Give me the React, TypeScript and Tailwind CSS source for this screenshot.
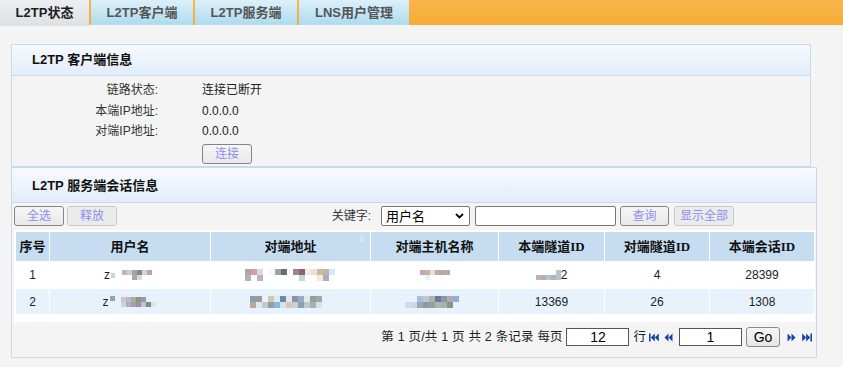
import React from "react";

const F = "font-['Liberation_Sans','Noto_Sans_CJK_SC',sans-serif]";

type PixRow = string[];
function Pix({ rows, size = 5 }: { rows: PixRow[]; size?: number }) {
  return (
    <span className="inline-flex flex-col align-middle">
      {rows.map((r, i) => (
        <span key={i} className="flex">
          {r.map((c, j) => (
            <span
              key={j}
              style={{ width: size, height: size, background: c || "transparent" }}
            />
          ))}
        </span>
      ))}
    </span>
  );
}

function Tab({ label, active, w }: { label: string; active?: boolean; w: string }) {
  return (
    <div
      className={
        "flex items-center justify-center font-bold text-[13px] h-[25px] " +
        w +
        (active
          ? " bg-gradient-to-b from-[#eceff1] to-[#dde1e3] text-[#1e1e1e] h-[26px]"
          : " bg-gradient-to-b from-[#dcf0f9] to-[#addbef] text-[#555]")
      }
    >
      {label}
    </div>
  );
}

function Btn({ label, disabled, w }: { label: string; disabled?: boolean; w: string }) {
  return (
    <div
      className={
        "h-[20px] flex items-center justify-center rounded-[3px] border text-[12px] text-[#8e8ef2] " +
        w +
        (disabled
          ? " border-[#c9c9c9] bg-[#ebebeb]"
          : " border-[#858585] bg-gradient-to-b from-[#f6f6f6] to-[#e9e9e9]")
      }
    >
      {label}
    </div>
  );
}

function NavIcon({ dir, bar }: { dir: "l" | "r"; bar?: boolean }) {
  const c = "#1744a8";
  if (dir === "l") {
    return (
      <svg width="10" height="9" viewBox="0 0 10 9">
        {bar && <rect x="0" y="0.5" width="1.6" height="8" fill={c} />}
        <polygon points={bar ? "1.8,4.5 5.8,0.5 5.8,8.5" : "0.5,4.5 4.5,0.5 4.5,8.5"} fill={c} />
        <polygon points={bar ? "5.8,4.5 9.8,0.5 9.8,8.5" : "4.5,4.5 8.5,0.5 8.5,8.5"} fill={c} />
      </svg>
    );
  }
  return (
    <svg width="10" height="9" viewBox="0 0 10 9">
      <polygon points={bar ? "0.2,0.5 4.2,4.5 0.2,8.5" : "1.5,0.5 5.5,4.5 1.5,8.5"} fill={c} />
      <polygon points={bar ? "4.2,0.5 8.2,4.5 4.2,8.5" : "5.5,0.5 9.5,4.5 5.5,8.5"} fill={c} />
      {bar && <rect x="8.4" y="0.5" width="1.6" height="8" fill={c} />}
    </svg>
  );
}

const user1: PixRow[] = [
  ["#c7b6af", "#d3c8d0", "#98a9a8", "#8f8190", "#c8d8d8", "#c89bab"],
  ["", "", "#b0a8a0", "#d8d8e6", "", ""],
];
const user2: PixRow[] = [
  ["#d0c8b8", "#b9b8d0", "#a0b198", "#8f9888", "#9898b0", "", ""],
  ["#c8d2e2", "#c0a8b0", "#a8a0a0", "#9890b0", "#b8c6d2", "#908870", "#d0e8e8"],
];
const addr1: PixRow[] = [
  ["#a9a8a6", "#d4a19f", "#e0d8d8", "", "#f0f8f8", "#a8a0a8", "#607079", "", "#a28282", "#8e6172", "#eeeee6", "#e6dfe2", "#d8b98f", "#b8b8b0", "#d8e8f8", ""],
  ["#b2b2c2", "", "#b9b1c8", "", "", "", "", "", "", "#c0d8d8", "", "", "#f3e9df", "#b0a9c0", "", ""],
];
const addr2: PixRow[] = [
  ["#9199b1", "#9899a1", "", "#d0c9b1", "#e0e8f0", "#6a89b1", "#e2e8f0", "#8891b1", "#98a9c9", "#e0e8f0", "#98a198", "#a0a9a9", ""],
  ["#b8a999", "#e8e8e0", "#c0c8d0", "#90a0a8", "#88b8e0", "#d8e0e8", "#d8c8b0", "#c8d0d8", "#90a0a8", "#c0c8d0", "#a8b0b0", "#d8e0e8", ""],
];
const host1: PixRow[] = [
  ["#c8a1c0", "#c0b898", "#e8e0c8", "#b0b0a8", "#d0a0a8", "#a8b0b0"],
  ["", "#e8f2fc", "", "", "", ""],
];
const host2: PixRow[] = [
  ["", "", "#a8c0e0", "#c0c8d0", "#b0b0b8", "#6878a0", "#8898a0", "#b0a8b8", "#98a8d8", ""],
  ["#d8d8e0", "#c8d8e8", "#a0a8b8", "#9098a8", "#90a890", "#a8b8b8", "#b0b0a8", "#909080", "", ""],
];
const tun1: PixRow[] = [
  ["", "", "", "", "#c0c0c8"],
  ["#c8b0a8", "#b8b0a8", "#a8c8d8", "#a8b8c8", "#c0c0c8"],
];

const cols = "grid grid-cols-[33px_160px_159px_127px_105px_104px_104px] gap-x-[1px]";

export default function App() {
  return (
    <div className={"w-[843px] h-[367px] bg-[#f4f4f4] text-[12px] text-[#222] overflow-hidden " + F}>
      {/* tabs */}
      <div className="flex h-[25px] bg-gradient-to-b from-[#f8b54b] to-[#f7ad34] items-start">
        <Tab label="L2TP状态" active w="w-[89px]" />
        <div className="w-[2px]" />
        <Tab label="L2TP客户端" w="w-[102px]" />
        <div className="w-[2px]" />
        <Tab label="L2TP服务端" w="w-[102px]" />
        <div className="w-[2px]" />
        <Tab label="LNS用户管理" w="w-[110px]" />
      </div>

      {/* panel 1 */}
      <div className="ml-[11px] mt-[19px] w-[800px] border border-[#c6daf0] bg-[#f4f4f4]">
        <div className="h-[31px] flex items-center pl-[20px] font-bold text-[13px] text-[#111] bg-gradient-to-b from-[#f7fafe] to-[#e1edf9] border-b border-[#c6daf0]">
          L2TP 客户端信息
        </div>
        <div className="pt-[4px] pb-[2px]">
          <div className="grid grid-cols-[146px_1fr] gap-x-[44px]">
            <div className="h-[20px] flex items-center justify-end text-[#333]">链路状态:</div>
            <div className="h-[20px] flex items-center">连接已断开</div>
            <div className="h-[21px] flex items-center justify-end text-[#333]">本端IP地址:</div>
            <div className="h-[21px] flex items-center">0.0.0.0</div>
            <div className="h-[20px] flex items-center justify-end text-[#333]">对端IP地址:</div>
            <div className="h-[20px] flex items-center">0.0.0.0</div>
            <div />
            <div className="pt-[3px]">
              <Btn label="连接" w="w-[50px]" />
            </div>
          </div>
        </div>
      </div>

      {/* panel 2 */}
      <div className="ml-[11px] w-[806px] border border-[#c6daf0] bg-[#f4f4f4]">
        <div className="h-[35px] flex items-center pl-[20px] pt-[2px] font-bold text-[13px] text-[#111] bg-gradient-to-b from-[#f7fafe] to-[#e1edf9] border-b border-[#c6daf0]">
          L2TP 服务端会话信息
        </div>
        <div className="flex items-center h-[20px] mt-[3px] pl-[2px]">
          <Btn label="全选" w="w-[50px]" />
          <div className="w-[3px]" />
          <Btn label="释放" disabled w="w-[50px]" />
          <div className="flex-1" />
          <span className="text-[#333] mr-[10px]">关键字:</span>
          <div className="relative w-[89px] h-[20px]">
            <select className="appearance-none w-full h-full border border-[#767676] rounded-[2px] bg-white pl-[4px] text-[13px] text-black outline-none">
              <option>用户名</option>
            </select>
            <svg className="absolute right-[6px] top-[7px] pointer-events-none" width="9" height="6" viewBox="0 0 9 6">
              <path d="M1 1 L4.5 4.5 L8 1" stroke="#000" strokeWidth="1.8" fill="none" />
            </svg>
          </div>
          <div className="w-[5px]" />
          <input className="w-[141px] h-[20px] border border-[#767676] rounded-[2px] bg-white outline-none" />
          <div className="w-[4px]" />
          <Btn label="查询" w="w-[49px]" />
          <div className="w-[5px]" />
          <Btn label="显示全部" disabled w="w-[60px]" />
          <div className="w-[82px]" />
        </div>

        {/* table */}
        <div className="mt-[4px] ml-[2px] mr-[1px] bg-white pt-[2px] pl-[2px] pb-[8px]">
          <div className={cols + " h-[29px] font-bold text-[13px] text-[#111] font-['Liberation_Serif','Noto_Sans_CJK_SC',serif]"}>
            {["序号", "用户名", "对端地址", "对端主机名称", "本端隧道ID", "对端隧道ID", "本端会话ID"].map((h, i) => (
              <div key={h} className="relative bg-[#c6dcf0] flex items-center justify-center">
                {h}
                {i === 2 && (
                  <span className="absolute right-[6px] top-[1px] text-white text-[10px] leading-none">↓</span>
                )}
              </div>
            ))}
          </div>
          <div className={cols + " h-[26px] mt-[1px] bg-white"}>
            <div className="flex items-center justify-center">1</div>
            <div className="flex items-center justify-center pr-[4px]">
              <span className="mr-[1px]">z</span>
              <span className="w-[4px] h-[5px] bg-[#c8d4de] mr-[7px]" />
              <Pix rows={user1} />
            </div>
            <div className="flex items-center justify-center pl-[4px]">
              <Pix rows={addr1} size={6} />
            </div>
            <div className="flex items-center justify-center">
              <Pix rows={host1} />
            </div>
            <div className="flex items-center justify-center">
              <Pix rows={tun1} />
              <span>2</span>
            </div>
            <div className="flex items-center justify-center">4</div>
            <div className="flex items-center justify-center">28399</div>
          </div>
          <div className={cols + " h-[25px] mt-[1px]"}>
            <div className="bg-[#e8f2fc] flex items-center justify-center">2</div>
            <div className="bg-[#e8f2fc] flex items-center justify-center pr-[2px]">
              <span className="mr-[1px]">z</span>
              <span className="w-[5px] h-[5px] bg-[#9aa0aa] mr-[6px] self-start mt-[7px]" />
              <Pix rows={user2} />
            </div>
            <div className="bg-[#e8f2fc] flex items-center justify-center pr-[4px]">
              <Pix rows={addr2} size={6} />
            </div>
            <div className="bg-[#e8f2fc] flex items-center justify-center">
              <Pix rows={host2} size={6} />
            </div>
            <div className="bg-[#e8f2fc] flex items-center justify-center">13369</div>
            <div className="bg-[#e8f2fc] flex items-center justify-center">26</div>
            <div className="bg-[#e8f2fc] flex items-center justify-center">1308</div>
          </div>
        </div>

        {/* pagination */}
        <div className="h-[35px] flex items-center justify-end pr-[4px] pb-[5px] text-[#222]">
          <span className="whitespace-pre text-[12.5px] tracking-[0.2px]">第 1 页/共 1 页 共 2 条记录 每页 </span>
          <div className="w-[63px] h-[18px] border border-[#555] bg-white flex items-center justify-center text-[14px] text-black">12</div>
          <span className="ml-[4px] text-[12.5px]">行</span>
          <span className="ml-[3px]"><NavIcon dir="l" bar /></span>
          <span className="ml-[5px]"><NavIcon dir="l" /></span>
          <div className="ml-[5px] w-[63px] h-[18px] border border-[#555] bg-white flex items-center justify-center text-[14px] text-black">1</div>
          <div className="ml-[4px] w-[34px] h-[20px] rounded-[3px] border border-[#8a8a8a] bg-gradient-to-b from-[#f6f6f6] to-[#e6e6e6] flex items-center justify-center text-[14px] text-black">Go</div>
          <span className="ml-[6px]"><NavIcon dir="r" /></span>
          <span className="ml-[6px]"><NavIcon dir="r" bar /></span>
        </div>
      </div>
    </div>
  );
}
